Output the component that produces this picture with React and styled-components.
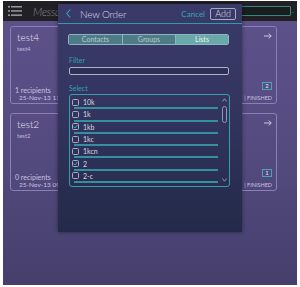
import React from 'react';
import styled, { createGlobalStyle } from 'styled-components';

const Global = createGlobalStyle`
  html, body { margin: 0; padding: 0; background: #ffffff; }
  body { font-family: Lato, "Noto Sans", sans-serif; font-weight: 400; }
  * { box-sizing: border-box; }
`;

const Screen = styled.div`
  position: relative;
  margin: 1px 3px 0 3px;
  width: 294px;
  height: 284px;
  display: flex;
  flex-direction: column;
  background: linear-gradient(180deg, #5d528a 0%, #564c82 45%, #463f6c 100%);
  overflow: hidden;
`;

const TopBar = styled.div`
  height: 20px;
  flex: none;
  display: flex;
  align-items: center;
  padding: 0 6px 0 5px;
  background: #212024;
`;

const AppTitle = styled.div`
  margin-left: 11px;
  font-size: 11px;
  font-weight: 300;
  font-style: italic;
  color: #8d8c92;
  letter-spacing: -0.2px;
`;

const Search = styled.div`
  margin-left: auto;
  width: 140px;
  height: 10px;
  border: 1px solid #2f8a82;
  border-radius: 1px;
  background: #1b1c1e;
  font-size: 6px;
  line-height: 7px;
  color: #6e7e80;
  padding-left: 150px;
`;

const Content = styled.div`
  display: flex;
  flex-direction: column;
  gap: 9px;
  padding: 5px 20px 0 7px;
`;

const Card = styled.div`
  height: 78px;
  border: 1px solid #8a80b3;
  border-radius: 3px;
  display: flex;
  justify-content: space-between;
  color: #d9d5ea;
`;

const CardMain = styled.div`
  display: flex;
  flex-direction: column;
  padding: 4px 0 1px 6px;
`;

const CardTitle = styled.div`
  font-size: 10px;
  font-weight: 300;
  line-height: 12px;
  color: #ebe8f6;
`;

const CardSub = styled.div`
  margin-top: 2px;
  font-size: 6px;
  line-height: 8px;
  color: #bdb6d8;
`;

const Recipients = styled.div`
  margin-top: auto;
  margin-left: -2px;
  font-size: 7px;
  line-height: 8px;
  color: #c9c3e0;
`;

const DateText = styled.div`
  margin-left: 2px;
  font-size: 6.5px;
  line-height: 8px;
  color: #c9c3e0;
`;

const CardSide = styled.div`
  display: flex;
  flex-direction: column;
  align-items: flex-end;
  padding: 6px 4px 1px 0;
`;

const CountBox = styled.div`
  margin-top: auto;
  width: 10px;
  height: 8px;
  border: 1px solid #4aa3b4;
  font-size: 6px;
  line-height: 6px;
  text-align: center;
  color: #dfe8f0;
`;

const Status = styled.div`
  margin-top: 4px;
  font-size: 5.5px;
  line-height: 8px;
  color: #c9c3e0;
`;

const Modal = styled.div`
  position: absolute;
  left: 55px;
  top: 3px;
  width: 184px;
  height: 228px;
  background: linear-gradient(180deg, #3a3a69 0%, #33355f 45%, #232a49 100%);
  box-shadow: 0 0 4px rgba(0, 0, 0, 0.45);
  display: flex;
  flex-direction: column;
`;

const ModalHeader = styled.div`
  height: 20px;
  flex: none;
  display: flex;
  align-items: center;
  padding: 0 6px 0 8px;
  border-bottom: 1px solid #2e9ba8;
`;

const ModalTitle = styled.div`
  margin-left: 9px;
  font-size: 10px;
  font-weight: 300;
  color: #d4d4e4;
  letter-spacing: -0.2px;
`;

const CancelLink = styled.div`
  margin-left: auto;
  font-size: 8px;
  color: #36a5b3;
`;

const AddButton = styled.div`
  margin-left: 5px;
  width: 26px;
  height: 12px;
  border: 1px solid #a9abc2;
  border-radius: 2px;
  font-size: 9px;
  font-weight: 300;
  line-height: 10px;
  text-align: center;
  color: #e0e0ea;
`;

const ModalBody = styled.div`
  display: flex;
  flex-direction: column;
  padding: 10px 13px 0 10px;
`;

const Segmented = styled.div`
  height: 11px;
  display: grid;
  grid-template-columns: 1fr 1fr 1fr;
  border: 1px solid #8fb4bb;
  border-radius: 2px;
  overflow: hidden;
`;

const Segment = styled.div`
  background: ${(p) => (p.$active ? '#6aa9a9' : '#4d7c88')};
  color: ${(p) => (p.$active ? '#e6f2f2' : '#b5c9ce')};
  border-left: ${(p) => (p.$first ? 'none' : '1px solid #8fb4bb')};
  font-size: 7px;
  line-height: 9px;
  text-align: center;
`;

const FieldLabel = styled.div`
  margin-top: ${(p) => p.$top}px;
  margin-left: 1px;
  font-size: 7px;
  line-height: 9px;
  color: #2fa3b2;
`;

const FilterInput = styled.div`
  margin-top: 2px;
  margin-left: 1px;
  height: 8px;
  border: 1px solid #aeb2c6;
  border-radius: 2px;
  background: rgba(20, 22, 50, 0.25);
`;

const ListBox = styled.div`
  margin-top: 1px;
  margin-left: 1px;
  margin-right: -1px;
  height: 93px;
  border: 1px solid #3a9caa;
  border-radius: 3px;
  display: flex;
  padding: 2px 0 0 2px;
`;

const Items = styled.div`
  display: flex;
  flex-direction: column;
`;

const Row = styled.div`
  height: 12.3px;
  display: flex;
  flex-direction: column;
`;

const ItemLine = styled.div`
  flex: 1;
  display: flex;
  align-items: center;
  gap: 4px;
`;

const Check = styled.div`
  width: 7px;
  height: 7px;
  border: 1px solid #a9adc4;
  border-radius: 1.5px;
  display: flex;
  align-items: center;
  justify-content: center;
`;

const ItemText = styled.div`
  font-size: 7px;
  line-height: 8px;
  color: #d6d6e4;
`;

const Underline = styled.div`
  margin-left: 2px;
  width: 144px;
  height: 2px;
  background: #348fa0;
`;

const ScrollCol = styled.div`
  margin-left: 3px;
  width: 7px;
  display: flex;
  flex-direction: column;
  align-items: center;
  padding-top: 1px;
`;

const Thumb = styled.div`
  margin-top: 4px;
  width: 5px;
  height: 17px;
  border: 1px solid #8a9bb8;
  border-radius: 3px;
`;

const DownArrow = styled.div`
  margin-top: auto;
  margin-bottom: 4px;
  line-height: 0;
`;

const MenuIcon = () => (
  <svg width="14" height="12" viewBox="0 0 14 12">
    <g fill="#9a99a0">
      <rect x="0" y="1" width="2" height="1.5" />
      <rect x="3" y="1" width="11" height="1.5" />
      <rect x="0" y="5.2" width="2" height="1.5" />
      <rect x="3" y="5.2" width="11" height="1.5" />
      <rect x="0" y="9.4" width="2" height="1.5" />
      <rect x="3" y="9.4" width="11" height="1.5" />
    </g>
  </svg>
);

const Arrow = () => (
  <svg width="8" height="6" viewBox="0 0 8 6">
    <path d="M0 3H7.2M4.6 0.5L7.2 3L4.6 5.5" stroke="#d6d2e8" strokeWidth="0.9" fill="none" />
  </svg>
);

const Chevron = () => (
  <svg width="5" height="9" viewBox="0 0 5 9">
    <path d="M4.3 0.5L0.8 4.5L4.3 8.5" stroke="#36a5b3" strokeWidth="1.1" fill="none" />
  </svg>
);

const Caret = ({ up }) => (
  <svg width="5" height="4" viewBox="0 0 5 4">
    <path d={up ? 'M0.3 3.5L2.5 0.8L4.7 3.5' : 'M0.3 0.5L2.5 3.2L4.7 0.5'} stroke="#aab2c8" strokeWidth="0.8" fill="none" />
  </svg>
);

const Tick = () => (
  <svg width="5" height="5" viewBox="0 0 5 5">
    <path d="M0.5 2.6L1.9 4L4.6 0.8" stroke="#3fb0c2" strokeWidth="1" fill="none" />
  </svg>
);

const cards = [
  { title: 'test4', sub: 'test4', recipients: '1 recipients', date: '25-Nov-13 11:', count: '2' },
  { title: 'test2', sub: 'test2', recipients: '0 recipients', date: '25-Nov-13 09:', count: '1' },
];

const items = [
  { label: '10k', checked: false },
  { label: '1k', checked: false },
  { label: '1kb', checked: true },
  { label: '1kc', checked: false },
  { label: '1kcn', checked: false },
  { label: '2', checked: true },
  { label: '2-c', checked: false },
];

export default function App() {
  return (
    <>
      <Global />
      <Screen>
        <TopBar>
          <MenuIcon />
          <AppTitle>Messages</AppTitle>
          <Search>...</Search>
        </TopBar>
        <Content>
          {cards.map((c) => (
            <Card key={c.title}>
              <CardMain>
                <CardTitle>{c.title}</CardTitle>
                <CardSub>{c.sub}</CardSub>
                <Recipients>{c.recipients}</Recipients>
                <DateText>{c.date}</DateText>
              </CardMain>
              <CardSide>
                <Arrow />
                <CountBox>{c.count}</CountBox>
                <Status>| FINISHED</Status>
              </CardSide>
            </Card>
          ))}
        </Content>
        <Modal>
          <ModalHeader>
            <Chevron />
            <ModalTitle>New Order</ModalTitle>
            <CancelLink>Cancel</CancelLink>
            <AddButton>Add</AddButton>
          </ModalHeader>
          <ModalBody>
            <Segmented>
              <Segment $first>Contacts</Segment>
              <Segment>Groups</Segment>
              <Segment $active>Lists</Segment>
            </Segmented>
            <FieldLabel $top={11}>Filter</FieldLabel>
            <FilterInput />
            <FieldLabel $top={9}>Select</FieldLabel>
            <ListBox>
              <Items>
                {items.map((it) => (
                  <Row key={it.label}>
                    <ItemLine>
                      <Check>{it.checked && <Tick />}</Check>
                      <ItemText>{it.label}</ItemText>
                    </ItemLine>
                    <Underline />
                  </Row>
                ))}
              </Items>
              <ScrollCol>
                <Caret up />
                <Thumb />
                <DownArrow>
                  <Caret />
                </DownArrow>
              </ScrollCol>
            </ListBox>
          </ModalBody>
        </Modal>
      </Screen>
    </>
  );
}
